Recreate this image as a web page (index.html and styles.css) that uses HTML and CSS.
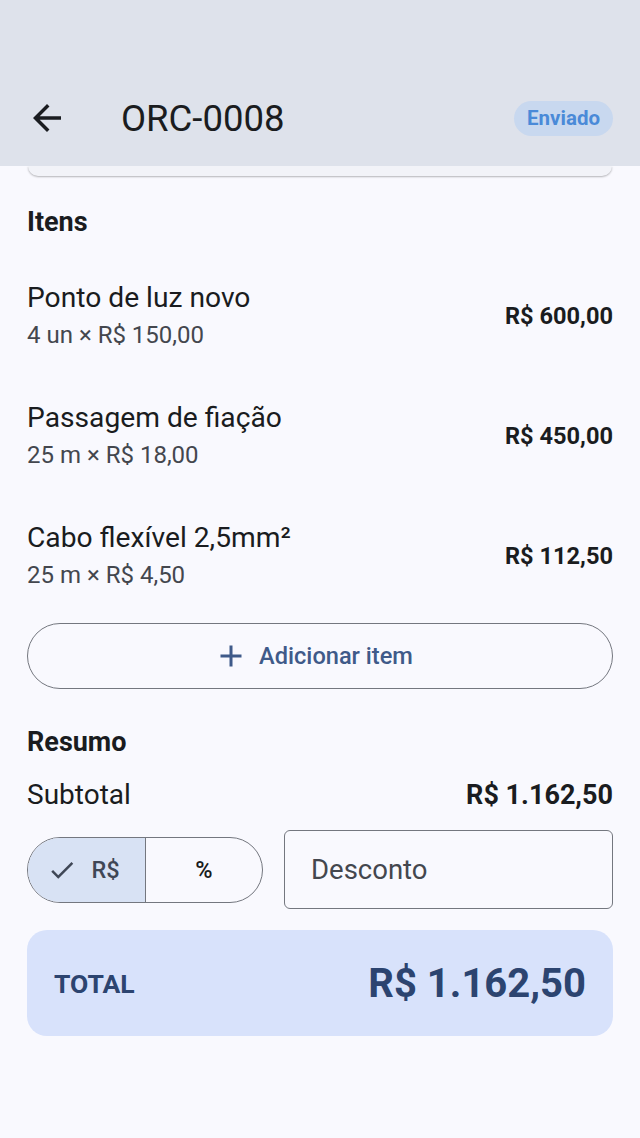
FILE: index.html
```html
<!DOCTYPE html>
<html lang="pt-BR">
<head>
<meta charset="utf-8">
<title>ORC-0008</title>
<link rel="stylesheet" href="styles.css">
</head>
<body>
<div class="screen">
  <header class="appbar">
    <button class="back" aria-label="Voltar">
      <svg viewBox="0 0 24 24" width="42" height="42"><path d="M20 11H7.83l5.59-5.59L12 4l-8 8 8 8 1.41-1.41L7.83 13H20v-2z"/></svg>
    </button>
    <h1 class="title">ORC-0008</h1>
    <span class="badge">Enviado</span>
  </header>
  <main class="content">
    <div class="card-tail"></div>
    <h2 class="section-title">Itens</h2>
    <ul class="items">
      <li class="item">
        <div class="item-info">
          <div class="item-name">Ponto de luz novo</div>
          <div class="item-sub">4 un × R$ 150,00</div>
        </div>
        <div class="item-price">R$ 600,00</div>
      </li>
      <li class="item">
        <div class="item-info">
          <div class="item-name">Passagem de fiação</div>
          <div class="item-sub">25 m × R$ 18,00</div>
        </div>
        <div class="item-price">R$ 450,00</div>
      </li>
      <li class="item">
        <div class="item-info">
          <div class="item-name">Cabo flexível 2,5mm²</div>
          <div class="item-sub">25 m × R$ 4,50</div>
        </div>
        <div class="item-price">R$ 112,50</div>
      </li>
    </ul>
    <button class="add-btn">
      <svg viewBox="0 0 24 24" width="36" height="36"><path d="M19 13h-6v6h-2v-6H5v-2h6V5h2v6h6v2z"/></svg>
      <span>Adicionar item</span>
    </button>
    <h2 class="section-title resumo">Resumo</h2>
    <div class="subtotal">
      <span>Subtotal</span>
      <span class="subtotal-value">R$ 1.162,50</span>
    </div>
    <div class="discount-row">
      <div class="segmented">
        <div class="seg seg-selected">
          <svg viewBox="0 0 24 24" width="30" height="30"><path d="M9 16.17 4.83 12l-1.42 1.41L9 19 21 7l-1.41-1.41z"/></svg>
          <span>R$</span>
        </div>
        <div class="seg"><span>%</span></div>
      </div>
      <div class="field"><span class="placeholder">Desconto</span></div>
    </div>
    <div class="total-card">
      <span class="total-label">TOTAL</span>
      <span class="total-value">R$ 1.162,50</span>
    </div>
  </main>
</div>
</body>
</html>
```
FILE: styles.css
```css
* { box-sizing: border-box; }
html, body { margin: 0; padding: 0; }
body {
  background: #f9f9fe;
  font-family: Roboto, "Noto Sans", "Liberation Sans", sans-serif;
  color: #1a1c20;
}
.screen {
  width: 640px;
  height: 1138px;
  overflow: hidden;
  display: flex;
  flex-direction: column;
}
.appbar {
  background: #dee2eb;
  height: 166px;
  padding: 70px 27px 0 26px;
  display: flex;
  align-items: center;
  position: relative;
  z-index: 2;
}
.back {
  background: none;
  border: 0;
  padding: 0;
  width: 42px;
  height: 42px;
  display: flex;
  fill: #1a1c20;
}
.title {
  margin: 0 0 0 53px;
  font-size: 36.5px;
  font-weight: 400;
  flex: 1;
  color: #1a1c20;
}
.badge {
  background: #c8d8ef;
  color: #4a8ad8;
  font-size: 20.5px;
  font-weight: 700;
  height: 35px;
  line-height: 35px;
  padding: 0 13px;
  border-radius: 18px;
}
.content {
  padding: 0 27px;
  display: flex;
  flex-direction: column;
}
.card-tail {
  height: 10px;
  margin: 0 1px;
  background: #f2f3f8;
  border-radius: 0 0 16px 16px;
  box-shadow: 0 1px 2px rgba(0,0,0,0.28);
}
.section-title {
  margin: 30px 0 20px;
  font-size: 27px;
  line-height: 32px;
  font-weight: 700;
}
.items { list-style: none; margin: 0; padding: 0; }
.item {
  display: flex;
  align-items: center;
  justify-content: space-between;
  padding: 24px 0 29px;
}
.item-name { font-size: 28.2px; line-height: 32px; }
.item-sub { font-size: 24px; line-height: 28px; margin-top: 7px; color: #44474e; }
.item-price { font-size: 23.6px; font-weight: 700; }
.add-btn {
  margin-top: 5px;
  height: 66px;
  width: 100%;
  border: 1.5px solid #74777f;
  border-radius: 33px;
  background: transparent;
  display: flex;
  align-items: center;
  justify-content: center;
  gap: 10px;
  padding: 0 14px 0 0;
  font-family: inherit;
  font-size: 23.6px;
  font-weight: 500;
  color: #3f5a89;
  fill: #3f5a89;
}
.resumo { margin: 37px 0 21px; }
.subtotal {
  display: flex;
  justify-content: space-between;
  align-items: center;
  font-size: 28px;
  line-height: 32px;
}
.subtotal-value { font-weight: 700; font-size: 27px; }
.discount-row {
  margin-top: 19px;
  display: flex;
  align-items: center;
  gap: 21px;
}
.segmented {
  flex: none;
  width: 236px;
  height: 66px;
  border: 1.5px solid #74777f;
  border-radius: 33px;
  display: flex;
  overflow: hidden;
}
.seg {
  flex: none;
  width: 50%;
  display: flex;
  align-items: center;
  justify-content: center;
  gap: 14px;
  font-size: 23.5px;
  font-weight: 500;
  color: #1a1c20;
}
.seg + .seg { border-left: 1.5px solid #74777f; }
.seg-selected { background: #d8e2f4; color: #3f4756; fill: #3f4756; padding-right: 6px; }
.field {
  flex: 1;
  height: 79px;
  border: 1.5px solid #74777f;
  border-radius: 6px;
  display: flex;
  align-items: center;
  padding-left: 26px;
}
.placeholder { font-size: 27.5px; color: #44474e; }
.total-card {
  margin-top: 21px;
  height: 106px;
  background: #d8e2fb;
  border-radius: 20px;
  display: flex;
  align-items: center;
  justify-content: space-between;
  padding: 0 27px;
  color: #2c4470;
}
.total-label { font-size: 26.5px; font-weight: 700; }
.total-value { font-size: 40px; font-weight: 700; }
```
